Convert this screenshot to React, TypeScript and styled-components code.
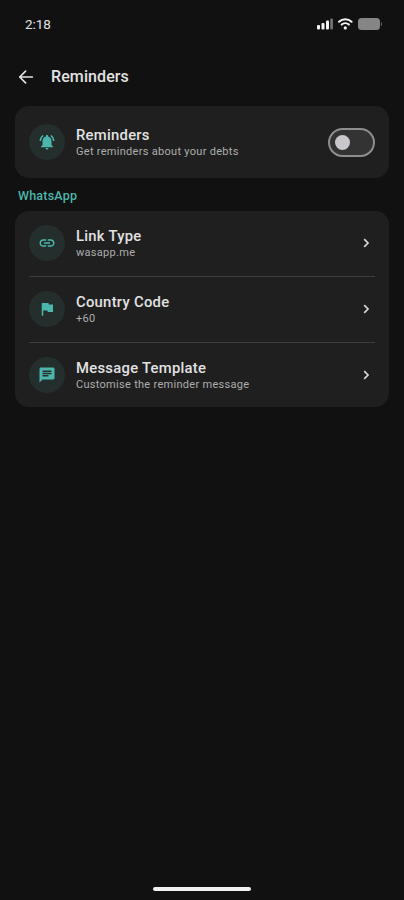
import React from "react";
import styled, { createGlobalStyle } from "styled-components";
import {
  MdChat,
  MdFlag,
  MdLink,
  MdNotificationsActive,
} from "react-icons/md";

const GlobalStyle = createGlobalStyle`
  * { box-sizing: border-box; }
  body { margin: 0; background: #111111; }
`;

const Screen = styled.div`
  display: flex;
  flex-direction: column;
  height: 900px;
  background: #111111;
  color: #e2e2e2;
  font-family: Roboto, "Liberation Sans", sans-serif;
`;

const StatusBar = styled.div`
  display: flex;
  align-items: center;
  justify-content: space-between;
  height: 48px;
  padding: 0 21px 0 25px;
`;

const Clock = styled.span`
  font-size: 13.5px;
  line-height: 16px;
  letter-spacing: -0.1px;
`;

const StatusIcons = styled.svg`
  display: block;
`;

const Header = styled.header`
  display: flex;
  align-items: center;
  gap: 14px;
  height: 58px;
  padding: 0 15px;
`;

const BackButton = styled.button`
  display: flex;
  padding: 0;
  border: 0;
  background: none;
  color: #e2e2e2;
`;

const PageTitle = styled.h1`
  margin: 0;
  font-size: 16px;
  line-height: 20px;
  font-weight: 500;
  letter-spacing: 0.1px;
`;

const Card = styled.section`
  margin: 0 15px;
  padding: 0 14px;
  border-radius: 14px;
  background: #1f1f1f;
`;

const SectionLabel = styled.h2`
  margin: 0;
  height: 33px;
  padding: 1px 18px 0;
  color: #4db6ac;
  font-size: 12.5px;
  line-height: 34px;
  font-weight: 500;
  letter-spacing: 0.2px;
`;

const Row = styled.div<{ $height: number; $divided?: boolean }>`
  display: flex;
  align-items: center;
  height: ${(p) => p.$height}px;
  padding-bottom: ${(p) => (p.$divided ? 1 : 0)}px;
  border-bottom: ${(p) => (p.$divided ? "1px solid #3e3e3e" : "0")};
`;

const IconBadge = styled.div`
  display: flex;
  align-items: center;
  justify-content: center;
  width: 36px;
  height: 36px;
  margin-right: 11px;
  border-radius: 50%;
  background: #232e2d;
  color: #4db6ac;
  font-size: 18px;
`;

const Labels = styled.div`
  flex: 1;
  padding-top: 1px;
`;

const Title = styled.div`
  font-size: 14.8px;
  line-height: 18px;
  font-weight: 500;
  letter-spacing: 0.28px;
`;

const Subtitle = styled.div`
  color: #adadad;
  font-size: 11px;
  line-height: 15px;
  letter-spacing: 0.29px;
`;

const Chevron = styled.svg`
  color: #d6d6d6;
`;

const Switch = styled.button`
  display: flex;
  align-items: center;
  width: 47px;
  height: 29px;
  padding: 0 5px;
  border: 2px solid #8e8e8e;
  border-radius: 15px;
  background: #333333;
`;

const Thumb = styled.span`
  width: 15px;
  height: 15px;
  border-radius: 50%;
  background: #cac7cc;
`;

const HomeIndicator = styled.div`
  width: 98px;
  height: 4px;
  margin: auto auto 9px 153px;
  border-radius: 2px;
  background: #f1f1f1;
`;

const settings = [
  { icon: <MdLink />, title: "Link Type", subtitle: "wasapp.me", height: 66 },
  { icon: <MdFlag />, title: "Country Code", subtitle: "+60", height: 66 },
  { icon: <MdChat />, title: "Message Template", subtitle: "Customise the reminder message", height: 64 },
];

export default function App() {
  return (
    <Screen>
      <GlobalStyle />
      <StatusBar>
        <Clock>2:18</Clock>
        <StatusIcons width="66" height="14" viewBox="0 0 66 14" fill="none">
          <g fill="#f4f4f4">
            <rect x="0" y="8" width="3" height="4.5" rx="1" />
            <rect x="4.5" y="6" width="3" height="6.5" rx="1" />
            <rect x="9" y="3.5" width="3" height="9" rx="1" />
            <rect x="13.3" y="1.5" width="2.6" height="11" rx="1" fill="#777777" />
            <circle cx="28.3" cy="10.9" r="1.6" />
          </g>
          <g stroke="#f4f4f4" strokeWidth="2" strokeLinecap="round">
            <path d="M22 4.8C25.5 1.5 31.1 1.5 34.6 4.8" />
            <path d="M24.7 7.6C26.7 5.8 29.9 5.8 31.9 7.6" />
          </g>
          <rect x="41" y="1" width="22" height="12" rx="3.5" fill="#858585" />
          <path d="M64 5C65.3 5.4 65.3 8.6 64 9Z" fill="#707070" />
        </StatusIcons>
      </StatusBar>
      <Header>
        <BackButton aria-label="Back">
          <svg
            width="22"
            height="22"
            viewBox="0 0 22 22"
            fill="none"
            stroke="currentColor"
            strokeWidth="1.7"
            strokeLinecap="round"
            strokeLinejoin="round"
          >
            <path d="M17.3 11H4.8M10.6 5.1L4.7 11L10.6 16.9" />
          </svg>
        </BackButton>
        <PageTitle>Reminders</PageTitle>
      </Header>
      <Card>
        <Row $height={72}>
          <IconBadge>
            <MdNotificationsActive />
          </IconBadge>
          <Labels>
            <Title>Reminders</Title>
            <Subtitle>Get reminders about your debts</Subtitle>
          </Labels>
          <Switch role="switch" aria-checked={false} aria-label="Reminders">
            <Thumb />
          </Switch>
        </Row>
      </Card>
      <SectionLabel>WhatsApp</SectionLabel>
      <Card>
        {settings.map((s, i) => (
          <Row key={s.title} $height={s.height} $divided={i < settings.length - 1}>
            <IconBadge>{s.icon}</IconBadge>
            <Labels>
              <Title>{s.title}</Title>
              <Subtitle>{s.subtitle}</Subtitle>
            </Labels>
            <Chevron width="18" height="18" viewBox="0 0 18 18" fill="none">
              <path d="M7.2 5.2L11 9L7.2 12.8" stroke="currentColor" strokeWidth="1.7" />
            </Chevron>
          </Row>
        ))}
      </Card>
      <HomeIndicator />
    </Screen>
  );
}
